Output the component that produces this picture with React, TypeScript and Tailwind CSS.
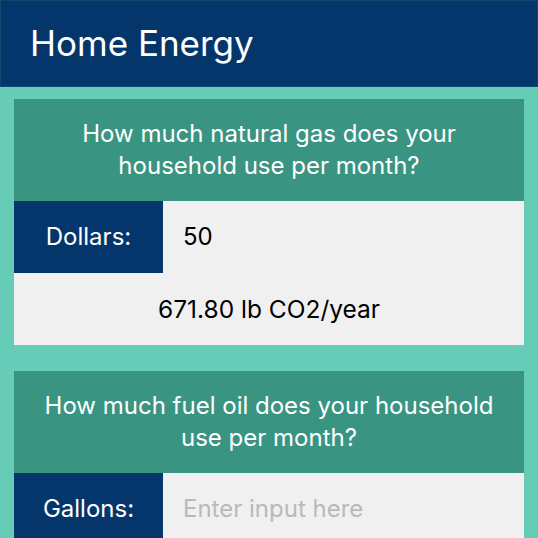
import { useState } from "react";

const FONT = { fontFamily: "Inter, 'Noto Sans', sans-serif" };

function Card({
  question,
  label,
  value,
  result,
}: {
  question: string;
  label: string;
  value: string;
  result?: string;
}) {
  const [text, setText] = useState(value);
  return (
    <div className="mx-[14px] flex shrink-0 flex-col">
      <div className="flex h-[102px] items-center justify-center bg-[#3a9482] px-[28px] text-center text-[24px] leading-[32px] text-white">
        {question}
      </div>
      <div className="flex h-[72px] shrink-0">
        <div className="flex w-[149px] items-center justify-center bg-[#05366b] text-[24px] text-white">
          {label}
        </div>
        <input
          value={text}
          onChange={(e) => setText(e.target.value)}
          placeholder="Enter input here"
          className="min-w-0 flex-1 bg-[#f0f0f1] pl-5 text-[24px] text-black outline-none placeholder:text-[#b9b9bd]"
        />
      </div>
      {result && (
        <div className="flex h-[72px] items-center justify-center bg-[#f0f0f1] text-[24.5px] text-black">
          {result}
        </div>
      )}
    </div>
  );
}

export default function App() {
  return (
    <div className="flex h-[538px] flex-col overflow-hidden bg-[#66ccb8]" style={FONT}>
      <div className="flex h-[87px] shrink-0 items-center border border-[#0c4a6b] bg-[#05366b] pl-[29px]">
        <h1 className="text-[35px] text-white">Home Energy</h1>
      </div>
      <div className="mt-[12px] flex shrink-0 flex-col gap-[26px]">
        <Card
          question="How much natural gas does your household use per month?"
          label="Dollars:"
          value="50"
          result="671.80 lb CO2/year"
        />
        <Card
          question="How much fuel oil does your household use per month?"
          label="Gallons:"
          value=""
        />
      </div>
    </div>
  );
}
